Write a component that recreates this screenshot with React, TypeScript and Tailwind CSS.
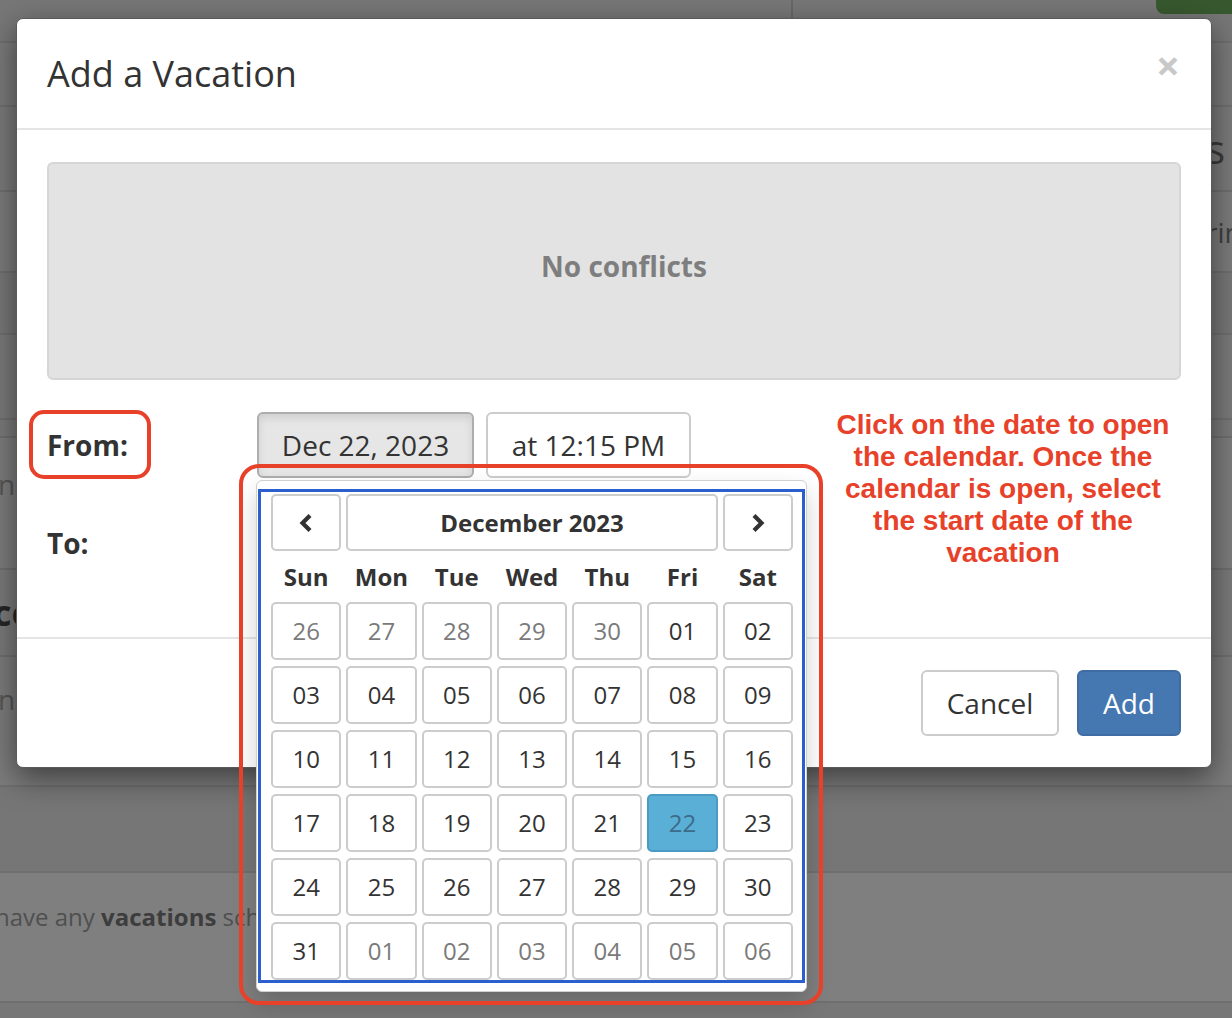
import React from "react";

type Day = { label: string; muted?: boolean; selected?: boolean };

const pad = (n: number) => (n < 10 ? `0${n}` : `${n}`);

const buildWeeks = (): Day[][] => {
  const days: Day[] = [];
  [26, 27, 28, 29, 30].forEach((d) => days.push({ label: `${d}`, muted: true }));
  for (let d = 1; d <= 31; d++) days.push({ label: pad(d), selected: d === 22 });
  for (let d = 1; d <= 6; d++) days.push({ label: pad(d), muted: true });
  const weeks: Day[][] = [];
  for (let i = 0; i < days.length; i += 7) weeks.push(days.slice(i, i + 7));
  return weeks;
};

const weeks = buildWeeks();
const dayNames = ["Sun", "Mon", "Tue", "Wed", "Thu", "Fri", "Sat"];

const Chevron = ({ dir }: { dir: "left" | "right" }) => (
  <svg width="16" height="20" viewBox="0 0 16 20" fill="none">
    <path
      d={dir === "left" ? "M12 2.5 L4.5 10 L12 17.5" : "M4 2.5 L11.5 10 L4 17.5"}
      stroke="#333333"
      strokeWidth="4.2"
      strokeLinejoin="miter"
    />
  </svg>
);

const Calendar = () => (
  <div className="absolute left-[-1px] top-[68px] z-10 w-[551px] rounded-[6px] border border-[#d0d0d0] bg-white px-[1px] py-[8px] shadow-[0_12px_24px_rgba(0,0,0,0.18)]">
    <div className="w-[547px] border-[3px] border-[#2b5fce] pl-[10px] pr-[9px] pt-[2px]">
      <div className="grid h-[57px] grid-cols-7 gap-x-[5px]">
        <div className="flex items-center justify-center rounded-[5px] border-2 border-[#cccccc] bg-white">
          <Chevron dir="left" />
        </div>
        <div className="col-span-5 flex items-center justify-center rounded-[5px] border-2 border-[#cccccc] bg-white text-[24px] font-bold text-[#333]">
          December 2023
        </div>
        <div className="flex items-center justify-center rounded-[5px] border-2 border-[#cccccc] bg-white">
          <Chevron dir="right" />
        </div>
      </div>
      <div className="grid h-[51px] grid-cols-7 gap-x-[5px]">
        {dayNames.map((n) => (
          <div key={n} className="flex items-center justify-center text-[24px] font-bold text-[#333]">
            {n}
          </div>
        ))}
      </div>
      <div className="flex flex-col gap-y-[6px]">
        {weeks.map((w, i) => (
          <div key={i} className="grid grid-cols-7 gap-x-[5px]">
            {w.map((d, j) => (
              <div
                key={j}
                className={
                  d.selected
                    ? "flex h-[58px] items-center justify-center rounded-[5px] border-2 border-[#4a9bc3] bg-[#5aafd6] text-[24px] text-[#3d6c89]"
                    : d.muted
                      ? "flex h-[58px] items-center justify-center rounded-[5px] border-2 border-[#cccccc] bg-white text-[24px] text-[#7a7a7a]"
                      : "flex h-[58px] items-center justify-center rounded-[5px] border-2 border-[#cccccc] bg-white text-[24px] text-[#333]"
                }
              >
                {d.label}
              </div>
            ))}
          </div>
        ))}
      </div>
    </div>
  </div>
);

const BgRow = ({ h, tone, children }: { h: string; tone: string; children?: React.ReactNode }) => (
  <div className={`${h} ${tone} flex items-center border-b-2 border-[#6f6f6f] overflow-hidden`}>{children}</div>
);

export default function App() {
  return (
    <div className="relative h-[1018px] w-full overflow-hidden bg-[#7a7a7a] font-['Open_Sans',sans-serif]">
      {/* dimmed page behind the modal */}
      <div className="flex flex-col">
        <div className="flex h-[43px] border-b-2 border-[#6f6f6f] bg-[#777777]">
          <div className="h-[18px] w-[793px] border-r-2 border-[#686868]" />
          <div className="flex flex-1 justify-end">
            <div className="h-[14px] w-[76px] rounded-bl-[8px] bg-[#38592f]" />
          </div>
        </div>
        <BgRow h="h-[64px]" tone="bg-[#7a7a7a]" />
        <BgRow h="h-[85px]" tone="bg-[#7a7a7a]">
          <div className="flex-1 text-right pr-[7px] text-[40px] text-[#3a3a3a]">Vacations</div>
        </BgRow>
        <BgRow h="h-[81px]" tone="bg-[#7c7c7c]">
          <div className="flex flex-1 justify-end">
            <span className="-mr-[25px] text-[28px] text-[#3f3f3f]">Sharing</span>
          </div>
        </BgRow>
        <BgRow h="h-[62px]" tone="bg-[#777777]" />
        <BgRow h="h-[85px]" tone="bg-[#7a7a7a]" />
        <BgRow h="h-[18px]" tone="bg-[#7a7a7a]" />
        <BgRow h="h-[132px]" tone="bg-[#7d7d7d]">
          <span className="-ml-[2px] -mt-[38px] text-[28px] text-[#555555]">na</span>
        </BgRow>
        <BgRow h="h-[87px]" tone="bg-[#7a7a7a]">
          <span className="-ml-[7px] text-[36px] font-bold text-[#262626]">ce</span>
        </BgRow>
        <BgRow h="h-[130px]" tone="bg-[#7c7c7c]">
          <span className="-ml-[2px] -mt-[44px] text-[28px] text-[#555555]">na</span>
        </BgRow>
        <BgRow h="h-[86px]" tone="bg-[#767676]" />
        <BgRow h="h-[130px]" tone="bg-[#7f7f7f]">
          <span className="-ml-[5px] -mt-[40px] whitespace-nowrap text-[24px] text-[#4f4f4f]">
            have any <b className="text-[#3d3d3d]">vacations</b> scheduled
          </span>
        </BgRow>
        <div className="h-[40px] bg-[#777777]" />
      </div>

      {/* modal */}
      <div className="absolute left-[16px] top-[18px] w-[1196px] rounded-[7px] border border-[#5a5a5a] bg-white shadow-[0_10px_30px_rgba(0,0,0,0.5)]">
        <div className="flex h-[111px] items-center justify-between border-b-2 border-[#e5e5e5] pl-[30px] pr-[31px]">
          <div className="text-[36px] leading-[50px] text-[#333]">Add a Vacation</div>
          <div className="-mt-[18px] text-[42px] font-bold leading-none text-[#c8c8c8]">×</div>
        </div>

        <div className="flex h-[507px] flex-col px-[30px] pt-[32px]">
          <div className="flex h-[218px] items-center justify-center rounded-[6px] border-2 border-[#d6d6d6] bg-[#e3e3e3] pb-[10px] pl-[20px] text-[28px] font-bold text-[#7e7e7e]">
            No conflicts
          </div>

          <div className="mt-[32px] flex h-[66px] items-center">
            <div className="relative w-[210px] text-[28px] font-bold text-[#333]">
              From:
              <div className="absolute -left-[18px] -top-[14px] h-[69px] w-[122px] rounded-[15px] border-[4px] border-[#e8412a]" />
            </div>
            <div className="relative">
              <div className="flex h-[66px] w-[217px] items-center justify-center rounded-[6px] border-2 border-[#adadad] bg-[#e6e6e6] text-[28px] text-[#333] shadow-[inset_0_4px_8px_rgba(0,0,0,0.1)]">
                Dec 22, 2023
              </div>
              <Calendar />
              <div className="absolute -left-[18px] top-[52px] z-20 h-[541px] w-[584px] rounded-[20px] border-[4px] border-[#e8412a]" />
            </div>
            <div className="ml-[12px] flex h-[66px] w-[205px] items-center justify-center rounded-[6px] border-2 border-[#cccccc] bg-white text-[28px] text-[#333]">
              at 12:15 PM
            </div>
          </div>

          <div className="mt-[32px] flex h-[66px] items-center">
            <div className="w-[210px] text-[28px] font-bold text-[#333]">To:</div>
            <div className="flex h-[66px] w-[217px] items-center justify-center rounded-[6px] border-2 border-[#cccccc] bg-white text-[28px] text-[#333]">
              Dec 22, 2023
            </div>
          </div>
        </div>

        <div className="flex h-[130px] items-start justify-end gap-[18px] border-t-2 border-[#e5e5e5] pr-[30px] pt-[31px]">
          <div className="flex h-[66px] w-[138px] items-center justify-center rounded-[6px] border-2 border-[#cccccc] bg-white text-[28px] text-[#333]">
            Cancel
          </div>
          <div className="flex h-[66px] w-[104px] items-center justify-center rounded-[6px] border-2 border-[#3e6ca3] bg-[#4577b0] text-[28px] text-white">
            Add
          </div>
        </div>
      </div>

      {/* annotation */}
      <div className="absolute left-[835px] top-[409px] w-[336px] text-center font-['Liberation_Sans',Arial,sans-serif] text-[28px] font-bold leading-[32px] text-[#e8412a]">
        <div className="whitespace-nowrap">Click on the date to open</div>
        <div className="whitespace-nowrap">the calendar. Once the</div>
        <div className="whitespace-nowrap">calendar is open, select</div>
        <div className="whitespace-nowrap">the start date of the</div>
        <div className="whitespace-nowrap">vacation</div>
      </div>
    </div>
  );
}
